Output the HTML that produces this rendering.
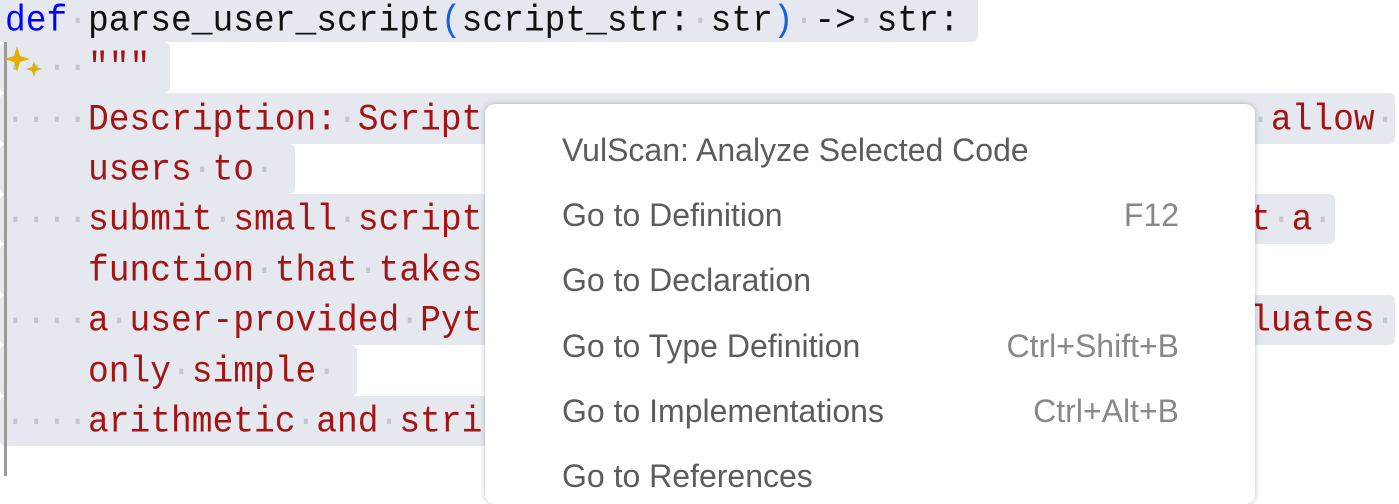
<!DOCTYPE html>
<html><head><meta charset="utf-8"><style>
html,body{margin:0;padding:0;width:1399px;height:476px;overflow:hidden;background:#fff;}
.code{position:absolute;left:0;top:2px;font-family:"Liberation Mono",monospace;font-size:34.6px;color:#a31515;}
.ln{position:absolute;left:5px;height:50px;line-height:50px;white-space:pre;transform:scaleY(1.08);transform-origin:0 50%;}
.bg{position:absolute;background:#e5e9ef;border-radius:6px;}
.d{color:#c2c6cc;}
.kw{color:#0000ff}.bk{color:#111}.pb{color:#1a5fe0}
.bar{position:absolute;left:4px;top:42px;width:3px;height:434px;background:#9a9a9a;}
.menu{position:absolute;left:485px;top:104px;width:770px;height:400px;background:#fff;border-radius:10px;box-shadow:0 0 6px rgba(0,0,0,.25);font-family:"Liberation Sans",sans-serif;font-size:32px;color:#5c5c5c;}
.it{position:absolute;left:77px;right:76px;height:40px;line-height:40px;}
.it span{position:absolute;right:0;top:0;color:#888;}
</style></head><body>
<div class="bg" style="left:0;top:0;width:978px;height:42px;border-radius:0 0 6px 0"></div>
<div class="bg" style="left:0;top:42px;width:170px;height:51px"></div>
<div class="bg" style="left:0;top:93px;width:1395px;height:51px"></div>
<div class="bg" style="left:0;top:144px;width:295px;height:50px"></div>
<div class="bg" style="left:0;top:194px;width:1335px;height:50px"></div>
<div class="bg" style="left:0;top:244px;width:700px;height:51px"></div>
<div class="bg" style="left:0;top:295px;width:1395px;height:50px"></div>
<div class="bg" style="left:0;top:345px;width:357px;height:51px"></div>
<div class="bg" style="left:0;top:396px;width:900px;height:50px"></div>
<div class="bar"></div>
<div class="code">
<div class="ln" style="top:-5px"><span class="kw">def</span><span class="d">·</span><span class="bk">parse_user_script</span><span class="pb">(</span><span class="bk">script_str:</span><span class="d">·</span><span class="bk">str</span><span class="pb">)</span><span class="d">·</span><span class="bk">-&gt;</span><span class="d">·</span><span class="bk">str:</span></div>
<div class="ln" style="top:42px"><span class="d">····</span>"""</div>
<div class="ln" style="top:94px"><span class="d">····</span>Description:<span class="d">·</span>Script<span class="d">······································</span>allow<span class="d">·</span></div>
<div class="ln" style="top:144px">    users<span class="d">·</span>to<span class="d">·</span></div>
<div class="ln" style="top:194px"><span class="d">····</span>submit<span class="d">·</span>small<span class="d">·</span>script<span class="d">·····································</span>t<span class="d">·</span>a<span class="d">·</span></div>
<div class="ln" style="top:245px">    function<span class="d">·</span>that<span class="d">·</span>takes</div>
<div class="ln" style="top:295px"><span class="d">····</span>a<span class="d">·</span>user-provided<span class="d">·</span>Pyt<span class="d">·····································</span>luates<span class="d">·</span></div>
<div class="ln" style="top:346px">    only<span class="d">·</span>simple<span class="d">·</span></div>
<div class="ln" style="top:396px"><span class="d">····</span>arithmetic<span class="d">·</span>and<span class="d">·</span>stri</div>
</div>
<svg style="position:absolute;left:4px;top:44px" width="40" height="38" viewBox="0 0 40 38"><path d="M13 2 L16 12 L26 15 L16 18 L13 28 L10 18 L0 15 L10 12Z" fill="#e0b000"/><path d="M30 17 L32 23 L38 25 L32 27 L30 33 L28 27 L22 25 L28 23Z" fill="#e0b000"/></svg>
<div class="menu">
<div class="it" style="top:26px">VulScan: Analyze Selected Code</div>
<div class="it" style="top:91px">Go to Definition<span>F12</span></div>
<div class="it" style="top:156px">Go to Declaration</div>
<div class="it" style="top:222px">Go to Type Definition<span>Ctrl+Shift+B</span></div>
<div class="it" style="top:287px">Go to Implementations<span>Ctrl+Alt+B</span></div>
<div class="it" style="top:352px">Go to References</div>
</div>
</body></html>
